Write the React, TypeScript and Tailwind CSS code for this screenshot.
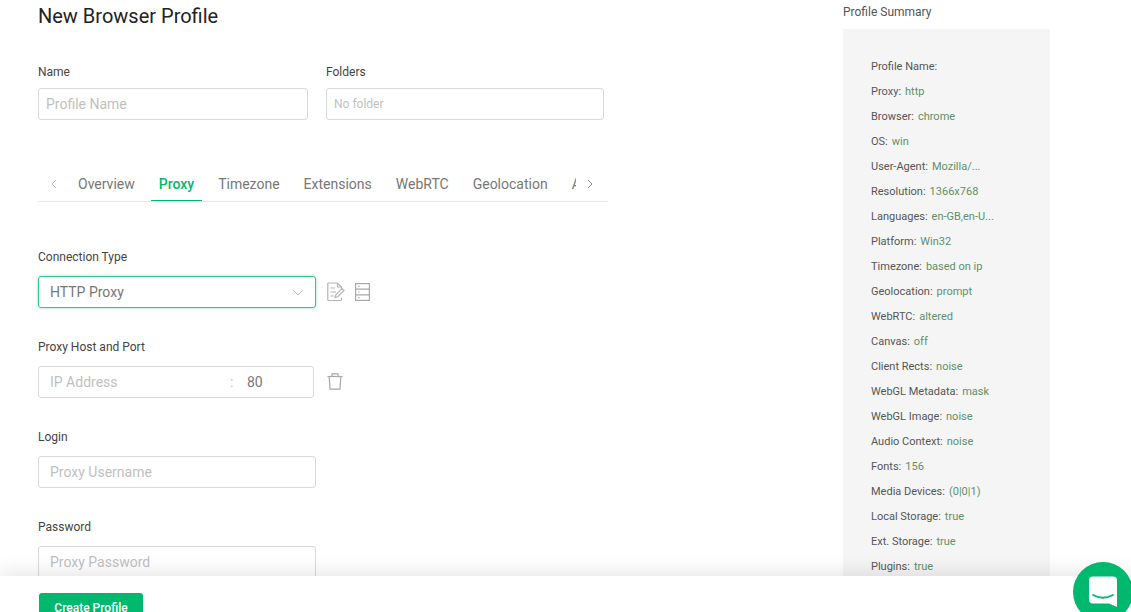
const summary = [
  ["Profile Name:", ""],
  ["Proxy:", "http"],
  ["Browser:", "chrome"],
  ["OS:", "win"],
  ["User-Agent:", "Mozilla/..."],
  ["Resolution:", "1366x768"],
  ["Languages:", "en-GB,en-U..."],
  ["Platform:", "Win32"],
  ["Timezone:", "based on ip"],
  ["Geolocation:", "prompt"],
  ["WebRTC:", "altered"],
  ["Canvas:", "off"],
  ["Client Rects:", "noise"],
  ["WebGL Metadata:", "mask"],
  ["WebGL Image:", "noise"],
  ["Audio Context:", "noise"],
  ["Fonts:", "156"],
  ["Media Devices:", "(0|0|1)"],
  ["Local Storage:", "true"],
  ["Ext. Storage:", "true"],
  ["Plugins:", "true"],
];

function NoteIcon() {
  return (
    <svg width="18" height="20" viewBox="0 0 18 20" fill="none" stroke="#b5b5b5" strokeWidth="1.2">
      <path d="M14.5 7.5V5L10.5 1H1.5Q0.8 1 0.8 1.7V17.8Q0.8 18.5 1.5 18.5H13.8Q14.5 18.5 14.5 17.8V15.5" />
      <path d="M10.5 1V5H14.5" />
      <path d="M3.5 6H8M3.5 10H9M3.5 14H7" />
      <path d="M8 15.5L9 12.5L15 6.5L17 8.5L11 14.5Z" />
    </svg>
  );
}

function ServerIcon() {
  return (
    <svg width="15" height="18" viewBox="0 0 15 18" fill="none" stroke="#a8a8a8" strokeWidth="1.2">
      <rect x="0.6" y="0.6" width="13.8" height="16.8" />
      <path d="M0.6 6.2H14.4M0.6 11.8H14.4" />
      <path d="M3 3.4H4.5M3 9H4.5M3 14.6H4.5" />
    </svg>
  );
}

function TrashIcon() {
  return (
    <svg width="16" height="17" viewBox="0 0 16 17" fill="none" stroke="#a8a8a8" strokeWidth="1.2">
      <path d="M0.5 3.5H15.5" />
      <path d="M5 3.5V0.8H11V3.5" />
      <path d="M2.2 3.5L3 16.2H13L13.8 3.5" />
    </svg>
  );
}

function Field({ label, placeholder }: { label: string; placeholder: string }) {
  return (
    <div className="mt-[31px]">
      <div className="text-xs leading-[16px] text-[#444]">{label}</div>
      <div className="mt-[11px] flex h-8 w-[278px] items-center rounded-[3px] border border-[#d9d9d9] bg-white px-[11px] text-sm text-[#bfbfbf]">
        {placeholder}
      </div>
    </div>
  );
}

export default function App() {
  return (
    <div className="relative flex h-[612px] overflow-hidden bg-white font-['Roboto',sans-serif]">
      <div className="w-[843px] shrink-0 pl-[38px]">
        <h1 className="pt-[3px] text-xl leading-[26px] font-normal text-[#222]">New Browser Profile</h1>

        <div className="mt-[35px] flex gap-[18px]">
          <div className="w-[270px]">
            <div className="text-xs leading-[16px] text-[#444]">Name</div>
            <div className="mt-[8px] flex h-8 items-center rounded-[3px] border border-[#d9d9d9] px-[7px] text-sm text-[#bfbfbf]">
              Profile Name
            </div>
          </div>
          <div className="w-[278px]">
            <div className="text-xs leading-[16px] text-[#444]">Folders</div>
            <div className="mt-[8px] flex h-8 items-center rounded-[3px] border border-[#d9d9d9] px-[7px] text-xs text-[#bfbfbf]">
              No folder
            </div>
          </div>
        </div>

        <div className="relative mt-[43px] flex h-[39px] w-[570px] items-center overflow-hidden border-b border-[#e8e8e8] pt-1 text-sm text-[#777]">
          <svg className="ml-[12px]" width="8" height="10" viewBox="0 0 8 10" fill="none" stroke="#bbb" strokeWidth="1">
            <path d="M6 1L2 5L6 9" />
          </svg>
          <div className="ml-[20px] flex items-center gap-6 whitespace-nowrap">
            <span>Overview</span>
            <span className="relative font-medium text-[#00b86e]">
              Proxy
              <span className="absolute -right-2 -bottom-[8px] -left-2 h-0.5 bg-[#00b86e]" />
            </span>
            <span>Timezone</span>
            <span>Extensions</span>
            <span>WebRTC</span>
            <span>Geolocation</span>
            <span>Audio</span>
          </div>
          <div className="absolute top-0 right-0 bottom-0 flex w-[32px] items-center justify-center bg-white pt-1">
            <svg className="mr-1" width="8" height="10" viewBox="0 0 8 10" fill="none" stroke="#888" strokeWidth="1">
              <path d="M2 1L6 5L2 9" />
            </svg>
          </div>
        </div>

        <div className="mt-[47px] text-xs leading-[16px] text-[#444]">Connection Type</div>
        <div className="mt-[11px] flex items-center">
          <div className="flex h-8 w-[278px] items-center justify-between rounded-[3px] border border-[#2fc98a] px-[11px] text-sm text-[#777] shadow-[0_0_3px_rgba(0,184,110,0.45)]">
            HTTP Proxy
            <svg width="12" height="7" viewBox="0 0 12 7" fill="none" stroke="#bbb" strokeWidth="1">
              <path d="M1 1L6 6L11 1" />
            </svg>
          </div>
          <div className="ml-[11px] flex items-center gap-[10px]">
            <NoteIcon />
            <ServerIcon />
          </div>
        </div>

        <div className="mt-[31px] text-xs leading-[16px] text-[#444]">Proxy Host and Port</div>
        <div className="mt-[11px] flex items-center">
          <div className="flex h-8 w-[276px] items-center rounded-[3px] border border-[#d9d9d9] pl-[11px] text-sm text-[#bfbfbf]">
            <span className="w-[180px]">IP Address</span>
            <span className="w-[17px]">:</span>
            <span className="text-[#777]">80</span>
          </div>
          <div className="ml-[13px] -mt-[2px]">
            <TrashIcon />
          </div>
        </div>

        <Field label="Login" placeholder="Proxy Username" />
        <Field label="Password" placeholder="Proxy Password" />
      </div>

      <div className="w-[207px] shrink-0">
        <div className="pt-[4px] text-xs leading-[16px] text-[#555]">Profile Summary</div>
        <div className="mt-[9px] h-[600px] bg-[#f5f5f5] pt-[26px] pl-[28px]">
          {summary.map(([name, value]) => (
            <div key={name} className="flex h-[25px] items-center gap-1 text-[11px] whitespace-nowrap text-[#555]">
              <span>{name}</span>
              {value && <span className="text-[#5f9068]">{value}</span>}
            </div>
          ))}
        </div>
      </div>

      <div className="absolute right-0 bottom-0 left-0 h-9 bg-white pt-[17px] pl-[39px] shadow-[0_-4px_20px_rgba(0,0,0,0.1)]">
        <button className="h-[30px] w-[104px] rounded-[3px] bg-[#00b86e] text-xs font-medium text-white">Create Profile</button>
      </div>

      <div className="absolute top-[562px] left-[1073px] flex h-[60px] w-[60px] items-center justify-center rounded-full bg-[#00b86e]">
        <svg className="mt-[-1px]" width="28" height="32" viewBox="0 0 28 32">
          <path d="M4 0.5H24Q28 0.5 28 4.5V31L20 27.5H4Q0 27.5 0 23.5V4.5Q0 0.5 4 0.5Z" fill="#fff" />
          <path d="M4 19Q14 24.5 24 19" fill="none" stroke="#00b86e" strokeWidth="1.8" strokeLinecap="round" />
        </svg>
      </div>
    </div>
  );
}
